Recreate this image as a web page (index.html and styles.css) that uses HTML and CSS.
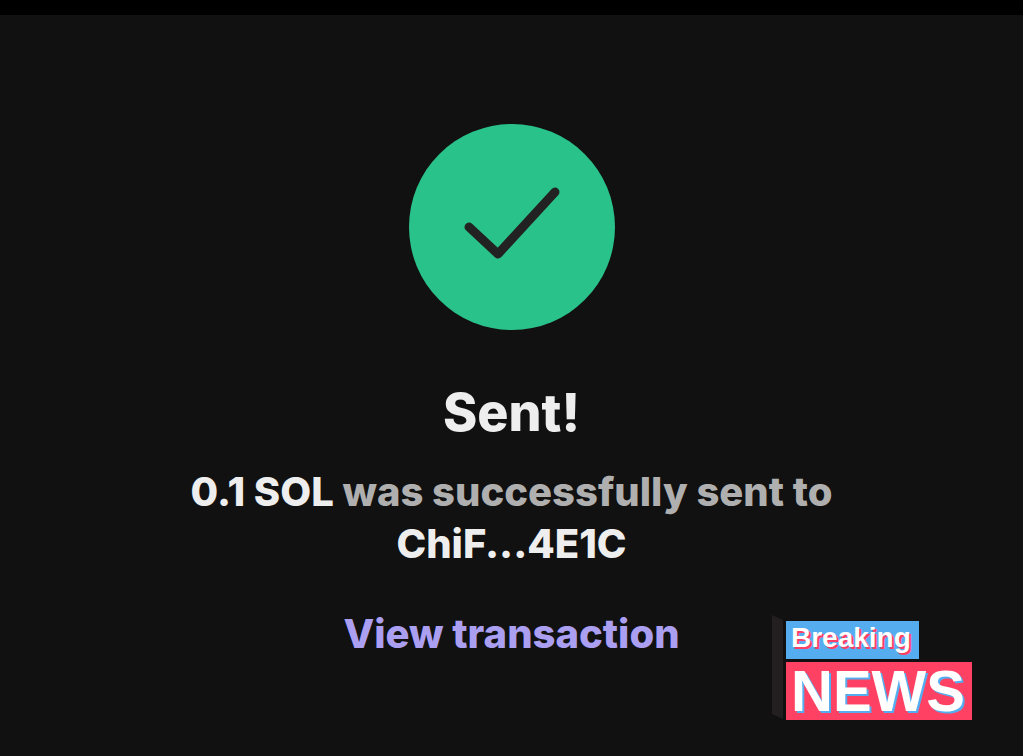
FILE: index.html
```html
<!DOCTYPE html>
<html lang="en">
<head>
  <meta charset="utf-8" />
  <meta name="viewport" content="width=device-width, initial-scale=1.0" />

  <title>Sent!</title>

  <link rel="stylesheet" href="styles.css">
</head>
<body>
  <main class="receipt">
    <svg class="receipt-icon" viewBox="0 0 206 206" aria-hidden="true">
      <circle cx="103" cy="103" r="103" fill="#2ac28b" />
      <path d="M60 103 L89 130 L146 68" fill="none" stroke="#222" stroke-width="9" stroke-linecap="round" stroke-linejoin="round" />
    </svg>

    <h1 class="receipt-title">Sent!</h1>

    <p class="receipt-text"><strong>0.1 SOL</strong> was successfully sent to <strong>ChiF...4E1C</strong></p>

    <a class="receipt-link" href="#">View transaction</a>
  </main>

  <aside class="news">
    <svg class="news-edge" viewBox="0 0 14 106" aria-hidden="true">
      <path d="M0 0 L11 5 V104 L0 99 Z" fill="#231f20" />
    </svg>
    <div class="news-labels">
      <span class="news-breaking">Breaking</span>
      <span class="news-main">NEWS</span>
    </div>
  </aside>
</body>
</html>
```
FILE: styles.css
```css
*, *::before, *::after {
  box-sizing: border-box;
}

body {
  margin: 0;
  min-height: 100vh;
  background: #111;
  border-top: 15px solid black;
  font-family: "Inter", sans-serif;
  overflow: hidden;
}

.receipt {
  display: flex;
  flex-direction: column;
  align-items: center;
  padding: 109px 24px 0;
  text-align: center;
  font-size: 40px;
  font-weight: 800;
  line-height: 52px;
}

.receipt-icon {
  width: 206px;
  height: 206px;
}

.receipt-title {
  margin: 51px 0 0;
  font-size: 52px;
  font-weight: 800;
  line-height: 64px;
  color: #eee;
}

.receipt-text {
  max-width: 700px;
  margin: 21px 0 0;
  color: #afafaf;
}

.receipt-text strong {
  font-weight: 800;
  color: #eee;
}

.receipt-link {
  margin-top: 38px;
  color: #ab9ff2;
  text-decoration: none;
}

/* sticker over the corner of the screen */
.news {
  position: absolute;
  right: 51px;
  bottom: 35px;
  display: flex;
  font-family: "Liberation Sans", sans-serif;
  font-weight: 700;
  color: white;
}

.news-edge {
  width: 14px;
  height: 106px;
}

.news-labels {
  display: flex;
  flex-direction: column;
  align-items: flex-start;
  gap: 3px;
  padding-top: 6px;
}

.news-breaking {
  height: 38px;
  padding: 0 8px 0 5px;
  background: #55acee;
  font-size: 28px;
  line-height: 34px;
  text-shadow: 2px 2px #ff3f66;
}

.news-main {
  height: 58px;
  padding: 0 7px 0 5px;
  background: #ff4263;
  font-size: 58px;
  line-height: 58px;
  text-shadow: 2px 2px #55acee;
}
```
